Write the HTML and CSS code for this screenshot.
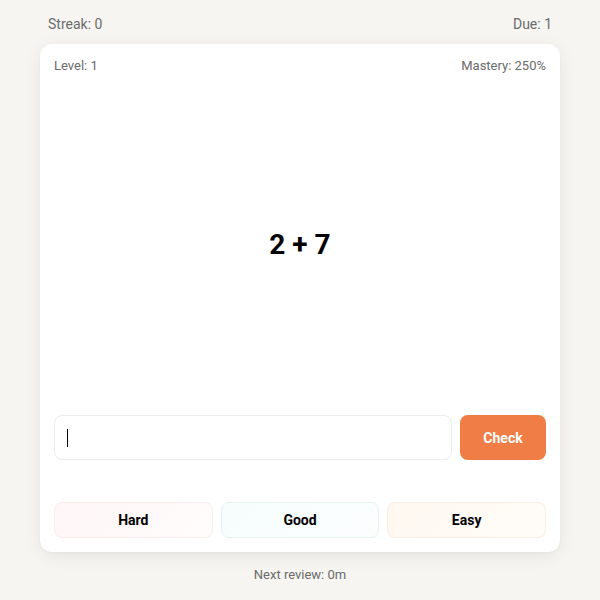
FILE: index.html
```html
<!DOCTYPE html>
<html lang="en">
<head>
<meta charset="utf-8">
<title>Math Review</title>
<link rel="stylesheet" href="styles.css">
</head>
<body>
<div class="app">
  <header class="topbar">
    <span>Streak: 0</span>
    <span>Due: 1</span>
  </header>
  <main class="card">
    <div class="meta">
      <span>Level: 1</span>
      <span>Mastery: 250%</span>
    </div>
    <div class="question">2 + 7</div>
    <div class="answer-row">
      <div class="answer-input" role="textbox"><span class="caret"></span></div>
      <button class="check">Check</button>
    </div>
    <div class="ratings">
      <button class="rate hard">Hard</button>
      <button class="rate good">Good</button>
      <button class="rate easy">Easy</button>
    </div>
  </main>
  <footer class="next">Next review: 0m</footer>
</div>
</body>
</html>
```
FILE: styles.css
```css
* { box-sizing: border-box; }
html, body { margin: 0; padding: 0; }
body {
  background: #f6f5f2;
  font-family: Roboto, "Liberation Sans", sans-serif;
  color: #111;
  width: 600px;
  height: 600px;
}
.app {
  width: 520px;
  margin: 0 auto;
  padding-top: 14px;
  display: flex;
  flex-direction: column;
}
.topbar {
  display: flex;
  justify-content: space-between;
  padding: 0 8px;
  font-size: 14px;
  line-height: 20px;
  color: #6b6b6b;
  height: 20px;
  margin-bottom: 10px;
}
.card {
  background: #fff;
  border-radius: 12px;
  box-shadow: 0 4px 18px rgba(0,0,0,0.07), 0 1px 3px rgba(0,0,0,0.03);
  height: 508px;
  padding: 14px;
  display: flex;
  flex-direction: column;
}
.meta {
  display: flex;
  justify-content: space-between;
  font-size: 13px;
  line-height: 16px;
  color: #6b6b6b;
}
.question {
  flex: 1;
  display: flex;
  align-items: center;
  justify-content: center;
  font-size: 28px;
  font-weight: 700;
  color: #000;
}
.answer-row {
  display: flex;
  gap: 8px;
  height: 45px;
}
.answer-input {
  flex: 1;
  border: 1px solid #ececec;
  border-radius: 8px;
  background: #fff;
  display: flex;
  align-items: center;
  padding-left: 12px;
}
.caret {
  width: 1px;
  height: 18px;
  background: #000;
}
.check {
  width: 86px;
  border: none;
  border-radius: 8px;
  background: #ef7d45;
  color: #fff;
  font-family: inherit;
  font-size: 14px;
  font-weight: 700;
}
.ratings {
  margin-top: 42px;
  display: grid;
  grid-template-columns: 1fr 1fr 1fr;
  gap: 8px;
  height: 36px;
}
.rate {
  border-radius: 8px;
  font-family: inherit;
  font-size: 14px;
  font-weight: 700;
  color: #000;
  background: #fff;
}
.hard {
  border: 1px solid #fbecee;
  background: linear-gradient(135deg, #fff6f7, #fffcfc);
}
.good {
  border: 1px solid #e6f3f1;
  background: linear-gradient(135deg, #f6fdfc, #fcfefe);
}
.easy {
  border: 1px solid #f8eee3;
  background: linear-gradient(135deg, #fff8f0, #fffcf8);
}
.next {
  text-align: center;
  font-size: 13px;
  line-height: 16px;
  color: #6b6b6b;
  margin-top: 15px;
}
```
